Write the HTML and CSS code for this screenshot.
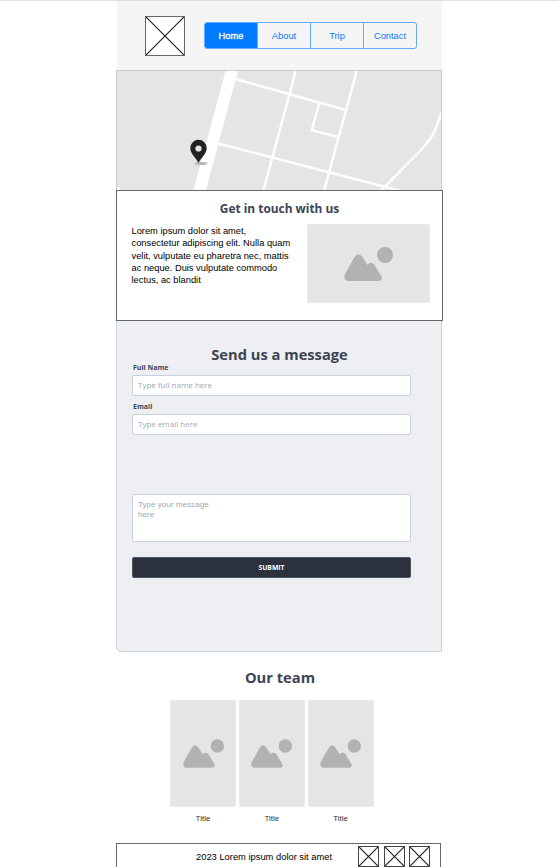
FILE: index.html
```html
<!DOCTYPE html>
<html lang="en">
<head>
<meta charset="utf-8">
<title>Contact</title>
<link rel="stylesheet" href="styles.css">
</head>
<body>
<svg class="defs" width="0" height="0" aria-hidden="true">
  <symbol id="cross" viewBox="0 0 40 40" preserveAspectRatio="none">
    <path d="M0 0L40 40M40 0L0 40" fill="none" stroke="#222" stroke-width="1.200" vector-effect="non-scaling-stroke"/>
  </symbol>
  <symbol id="picture" viewBox="0 0 49 34">
    <path d="M1 27L10.500 10Q14.500 4.500 18.500 10L23.500 18Q27 13.500 30.500 18L37.500 29.500Q39 34 34.500 34H4Q-1 33 1 27Z" fill="#b2b2b2"/>
    <circle cx="41" cy="8" r="8" fill="#b2b2b2"/>
  </symbol>
</svg>
<div class="page">
  <header class="header">
    <div class="logo"><svg><use href="#cross"/></svg></div>
    <nav class="nav">
      <a class="active">Home</a><a>About</a><a>Trip</a><a>Contact</a>
    </nav>
  </header>
  <section class="map">
    <svg viewBox="117 71 324 119" width="324" height="119">
      <g fill="none" stroke="#fff" stroke-width="2.400">
        <path d="M232 70L199.500 191" stroke-width="12"/>
        <path d="M235 79L346 110M218 143.500L399 190.500M296 70L263.300 191M357 70L324 191M319.300 103L311.700 130.500L338.500 137M380 191.500L421 150C434 136 435 132 443 108M115 187L123 192"/>
      </g>
      <ellipse cx="201" cy="163.500" rx="6.500" ry="1.600" fill="#b8b8b8"/>
      <path fill="#222" fill-rule="evenodd" d="M198.500 163C196 157.500 190.300 154 190.300 148A8.200 8.200 0 0 1 206.700 148C206.700 154 201 157.500 198.500 163ZM198.500 145.400A3.100 3.100 0 1 0 198.500 151.600A3.100 3.100 0 1 0 198.500 145.400Z"/>
    </svg>
  </section>
  <section class="touch">
    <h2>Get in touch with us</h2>
    <div class="touch-row">
      <p>Lorem ipsum dolor sit amet,<br>consectetur adipiscing elit. Nulla quam<br>velit, vulputate eu pharetra nec, mattis<br>ac neque. Duis vulputate commodo<br>lectus, ac blandit</p>
      <div class="photo"><svg width="49" height="34"><use href="#picture"/></svg></div>
    </div>
  </section>
  <form class="message">
    <h1>Send us a message</h1>
    <label>Full Name</label>
    <div class="field">Type full name here</div>
    <label>Email</label>
    <div class="field">Type email here</div>
    <div class="field area">Type your message<br>here</div>
    <div class="submit">SUBMIT</div>
  </form>
  <section class="team">
    <h1>Our team</h1>
    <div class="members">
      <figure><div class="portrait"><svg width="41" height="29"><use href="#picture"/></svg></div><figcaption>Title</figcaption></figure>
      <figure><div class="portrait"><svg width="41" height="29"><use href="#picture"/></svg></div><figcaption>Title</figcaption></figure>
      <figure><div class="portrait"><svg width="41" height="29"><use href="#picture"/></svg></div><figcaption>Title</figcaption></figure>
    </div>
  </section>
  <footer class="footer">
    <span>2023 Lorem ipsum dolor sit amet</span>
    <div class="social">
      <i><svg><use href="#cross"/></svg></i><i><svg><use href="#cross"/></svg></i><i><svg><use href="#cross"/></svg></i>
    </div>
  </footer>
</div>
</body>
</html>
```
FILE: styles.css
```css
* { box-sizing: border-box; }
html { overflow: hidden; }
body {
  margin: 0;
  height: 867px;
  overflow: hidden;
  background: #fff;
  border-top: 1px solid #e0e0e0;
  font-family: "Liberation Sans", sans-serif;
}
.defs { display: none; }
svg { display: block; }
h1, h2, p, figure { margin: 0; }
h1, h2 {
  font-family: "Open Sans", sans-serif;
  font-weight: 700;
  color: #3d4452;
  text-align: center;
}
h1 { font-size: 14.7px; line-height: 20px; }
h2 { font-size: 11.9px; line-height: 16px; }
.page { width: 326px; margin-left: 116px; }
.header {
  height: 69px;
  margin-left: 1px;
  padding: 15px 0 0 28px;
  display: flex;
  gap: 19px;
  background: #f5f5f5;
}
.logo { width: 40px; height: 40px; background: #fff; border: 1px solid #666; }
.logo svg { width: 38px; height: 38px; }
.nav {
  display: grid;
  grid-template-columns: 52px 53px 53px 53px;
  width: 213px;
  height: 27px;
  margin-top: 6px;
  border: 1px solid #64abff;
  border-radius: 3px;
  overflow: hidden;
}
.nav a {
  font-size: 9.3px;
  line-height: 26px;
  color: #0a7aff;
  text-align: center;
}
.nav a + a { border-left: 1px solid #64abff; }
.nav .active { background: #007aff; color: #fff; -webkit-text-stroke: 0.3px #fff; }
.map { height: 120px; background: #e5e5e5; border: solid #ccc; border-width: 1px 1px 0; }
.touch {
  width: 327px;
  height: 131px;
  padding: 9px 0 0 15px;
  background: #fff;
  border: 1px solid #666;
}
.touch h2 { margin-right: 15px; }
.touch-row { display: flex; justify-content: space-between; padding: 8px 12px 0 0; }
.touch p { margin-left: -0.5px; padding-top: 1px; font-size: 9.3px; line-height: 12.3px; white-space: nowrap; color: #000; }
.photo {
  width: 123px;
  height: 79px;
  display: grid;
  place-items: center;
  background: #e5e5e5;
  border: 1px solid #ececec;
}
.message {
  height: 331px;
  padding: 23px 30px 0 15px;
  background: #edeff3;
  border: 1px solid #cbd5e0;
  border-top: 0;
  border-radius: 0 0 0 5px;
}
.message h1 { margin-left: 16px; }
.message label {
  display: block;
  height: 10px;
  margin: -1px 0 2px 1px;
  font: 700 7px/10px "Open Sans", sans-serif;
  color: #3d4452;
}
.field {
  height: 21px;
  padding: 0 5px;
  background: #fff;
  border: 1px solid #c6d2de;
  border-radius: 2px;
  font: 8px/18px "Open Sans", sans-serif;
  color: #a0a9b5;
}
.field + label { margin-top: 6px; }
.area { height: 48px; margin-top: 59px; padding-top: 5px; font: 8.100px/10px "Liberation Sans", sans-serif; }
.submit {
  height: 21px;
  margin-top: 15px;
  border: 1px solid #4b5562;
  border-radius: 2px;
  background: #2b323d;
  color: #fff;
  font: 700 6.8px/20px "Open Sans", sans-serif;
  text-align: center;
}
.team { height: 191px; padding-top: 15px; }
.team h1 { margin-left: 2px; }
.members { display: flex; gap: 2.800px; margin: 13px 0 0 54px; }
.portrait {
  width: 66px;
  height: 107px;
  display: grid;
  place-items: center;
  background: #e5e5e5;
  border: 1px solid #ececec;
}
figcaption { margin-top: 7px; font-size: 8px; line-height: 10px; text-align: center; color: #333; }
.footer {
  width: 325px;
  height: 30px;
  padding-left: 79px;
  display: flex;
  border: 1px solid #666;
  font-size: 9.35px;
  line-height: 26px;
  color: #000;
}
.footer span { width: 162px; white-space: nowrap; }
.social { display: flex; gap: 4.500px; padding-top: 2px; }
.social i { width: 21px; height: 21px; border: 1px solid #444; }
.social svg { width: 19px; height: 19px; }
```
